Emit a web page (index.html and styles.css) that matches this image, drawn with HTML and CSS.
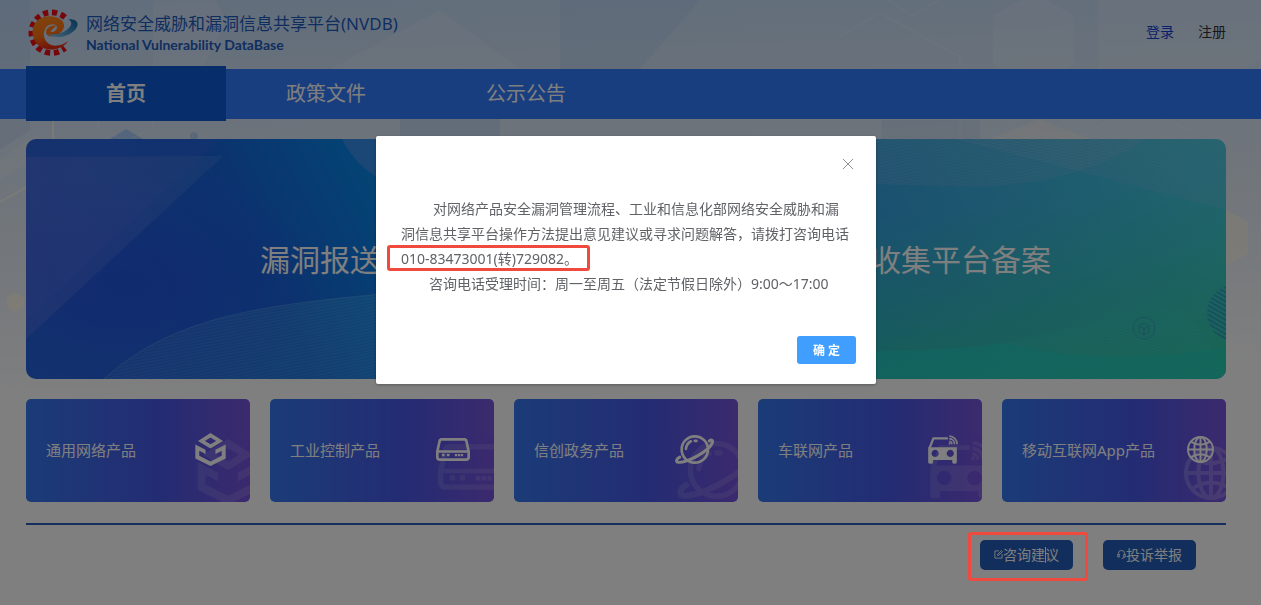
FILE: index.html
```
<!DOCTYPE html>
<html lang="zh-CN">
<head>
    <meta charset="UTF-8">
    <meta name="viewport" content="width=device-width, initial-scale=1.0">
    <title>网络安全威胁和漏洞信息共享平台</title>
    <link rel="stylesheet" href="styles.css">
</head>
<body>
    <!-- 图标 -->
    <svg class="sprite" aria-hidden="true">
        <symbol id="icon-cube" viewBox="0 0 92 100">
            <path fill-rule="evenodd" d="M46 0L84 24L46 47L8 24ZM46 14L29 24L46 34L63 24Z"/>
            <path d="M0 35L31 51V64L12 54V69L46 86L80 69V54L61 64V51L92 35V77L46 100L0 77Z"/>
        </symbol>
        <symbol id="icon-drive" viewBox="0 0 103 69">
            <path d="M17 4H86Q91 4 92 9L99 41V57Q99 65 91 65H12Q4 65 4 57V41L11 9Q12 4 17 4Z" fill="none" stroke="currentColor" stroke-width="8"/>
            <path d="M4 37H99V44H4ZM18 47h8v8h-8zM33 47h8v8h-8zM57 48h7v7h-7zM66 48h7v7h-7zM75 48h7v7h-7z"/>
        </symbol>
        <symbol id="icon-planet" viewBox="0 0 118 88">
            <circle cx="60" cy="44" r="40" fill="none" stroke="currentColor" stroke-width="8"/>
            <path d="M14 67C4 72 1 82 10 83C38 84 103 49 113 24C116 16 110 13 104 18" fill="none" stroke="currentColor" stroke-width="9" stroke-linecap="round"/>
            <path d="M33 42C34 32 39 24 48 19M60 18H65" fill="none" stroke="currentColor" stroke-width="8" stroke-linecap="round"/>
        </symbol>
        <symbol id="icon-car" viewBox="0 0 90 88">
            <path d="M4 40L16 10H60" fill="none" stroke="currentColor" stroke-width="7"/>
            <path fill-rule="evenodd" d="M0 37H87V82Q87 87 82 87H78Q73 87 73 82V76H15V82Q15 87 10 87H5Q0 87 0 82ZM21 45a11 11 0 1 0 .1 0ZM67 45a11 11 0 1 0 .1 0Z"/>
            <path d="M64 3A25 25 0 0 1 88 28M64 11A17 17 0 0 1 80 28M64 19A9 9 0 0 1 72 28" fill="none" stroke="currentColor" stroke-width="5"/>
            <circle cx="65" cy="26" r="3"/>
        </symbol>
        <symbol id="icon-globe" viewBox="0 0 82 82">
            <g fill="none" stroke="currentColor" stroke-width="6">
                <circle cx="41" cy="41" r="38"/>
                <ellipse cx="41" cy="41" rx="19" ry="38"/>
                <path d="M41 3V79M3 41H79M12 17Q41 36 70 17M12 65Q41 46 70 65"/>
            </g>
        </symbol>
    </svg>

    <!-- 页面背景 -->
    <svg class="page-bg" viewBox="0 0 1261 400" preserveAspectRatio="xMidYMin slice" aria-hidden="true">
        <defs>
            <linearGradient id="sky" x1="0" y1="0" x2="0.1" y2="1">
                <stop offset="0" stop-color="#c4dcf8"/>
                <stop offset="0.35" stop-color="#d8e6f6"/>
                <stop offset="0.7" stop-color="#ebf1f8"/>
                <stop offset="1" stop-color="#ffffff"/>
            </linearGradient>
        </defs>
        <rect width="1261" height="400" fill="url(#sky)"/>
        <g fill="#ffffff" fill-opacity="0.14">
            <path d="M153 -20L190 -40L227 20L190 90L153 68Z"/>
            <path d="M993 16L1034 -8L1074 16V64L1034 88L993 64Z"/>
            <path d="M1098 -10H1261V60L1200 90L1098 70Z"/>
            <path d="M330 69L440 10L520 69Z"/>
        </g>
        <path d="M0 0H30V130L0 150ZM560 0H700L640 69H560ZM881 120H980V139H881Z" fill="#9fc0ec" fill-opacity="0.2"/>
        <path d="M400 119H500V139H400Z" fill="#9fc0ec" fill-opacity="0.3"/>
        <path d="M990 139L1040 119L1090 139Z" fill="#fff6e8" fill-opacity="0.35"/>
        <path d="M0 160L34 136L56 146L0 180Z" fill="#ffffff" fill-opacity="0.2"/>
        <path d="M105 142L126 129L148 142Z" fill="#a9cdf8"/>
        <circle cx="194" cy="136" r="4" fill="#b4d0f4"/>
        <g fill="none" stroke="#ffffff" stroke-opacity="0.25">
            <path d="M885 -2L913 16L942 -2M840 36L880 13L960 57V139M1087 139V131L1140 110L1193 131V139"/>
            <path d="M98 119V127L126 142L153 127V119"/>
        </g>
        <path d="M0 202L27 187M53 119V139" fill="none" stroke="#fffaf0" stroke-opacity="0.7" stroke-width="2"/>
        <path d="M7 298L15 293L24 298V307L15 312L7 307Z" fill="#fff8ea"/>
        <path d="M1226 210L1248 222V254L1226 266Z" fill="#fff8ea" fill-opacity="0.6"/>
    </svg>

    <header class="header">
        <div class="brand">
            <svg class="logo" viewBox="28 23 150 144" aria-hidden="true">
                <defs>
                    <linearGradient id="orange" x1="0" y1="0" x2="0.3" y2="1">
                        <stop offset="0" stop-color="#ff8a1e"/>
                        <stop offset="0.6" stop-color="#ff7412"/>
                        <stop offset="1" stop-color="#e82a10"/>
                    </linearGradient>
                    <linearGradient id="blue" x1="0" y1="1" x2="1" y2="0">
                        <stop offset="0" stop-color="#8cc8ec"/>
                        <stop offset="1" stop-color="#0a64a8"/>
                    </linearGradient>
                </defs>
                <path d="M139 51A61 61 0 1 0 139 143" fill="none" stroke="#ec0c14" stroke-width="17" stroke-dasharray="16 10.7"/>
                <path d="M148 122C127 158 50 160 42 102C38 58 78 42 110 50C142 58 144 86 120 101C106 110 86 112 82 98C81 82 98 73 112 76C106 84 98 88 96 94C102 97 113 92 115 82C116 70 95 67 83 80C66 102 80 136 110 136C126 136 137 131 148 122Z" fill="url(#orange)"/>
                <path d="M148 57C178 54 186 74 165 93C144 112 108 116 86 102C115 105 138 97 150 84C161 72 160 62 148 57Z" fill="url(#blue)"/>
            </svg>
            <div>
                <h1 class="brand-name">网络安全威胁和漏洞信息共享平台(NVDB)</h1>
                <p class="brand-sub">National Vulnerability DataBase</p>
            </div>
        </div>
        <div class="account">
            <a class="login" href="#">登录</a>
            <a href="#">注册</a>
        </div>
    </header>

    <nav class="nav">
        <a class="nav-item active" href="#">首页</a>
        <a class="nav-item" href="#">政策文件</a>
        <a class="nav-item" href="#">公示公告</a>
    </nav>

    <main class="main">
        <section class="banner">
            <svg class="banner-bg" viewBox="0 0 1200 240" preserveAspectRatio="none" aria-hidden="true">
                <defs>
                    <linearGradient id="base" x1="0" y1="0.1" x2="1" y2="0">
                        <stop offset="0" stop-color="#2464dc"/>
                        <stop offset="0.15" stop-color="#1864dc"/>
                        <stop offset="0.3" stop-color="#068cec"/>
                        <stop offset="0.7" stop-color="#36a4e0"/>
                        <stop offset="1" stop-color="#42ccdc"/>
                    </linearGradient>
                    <radialGradient id="deep" cx="0.25" cy="0.6" r="0.5">
                        <stop offset="0" stop-color="#2450e0" stop-opacity="0.7"/>
                        <stop offset="1" stop-color="#2450e0" stop-opacity="0"/>
                    </radialGradient>
                    <linearGradient id="green" x1="0.5" y1="0.3" x2="0.7" y2="1">
                        <stop offset="0" stop-color="#30cc98" stop-opacity="0"/>
                        <stop offset="1" stop-color="#30cc98" stop-opacity="0.75"/>
                    </linearGradient>
                    <linearGradient id="violet" x1="0" y1="0" x2="1" y2="0.3">
                        <stop offset="0" stop-color="#8a80f0" stop-opacity="0.26"/>
                        <stop offset="1" stop-color="#8fb4f0" stop-opacity="0.14"/>
                    </linearGradient>
                    <linearGradient id="aqua" x1="0" y1="0" x2="1" y2="0">
                        <stop offset="0" stop-color="#4aa4e8" stop-opacity="0.1"/>
                        <stop offset="1" stop-color="#3cc8f0" stop-opacity="0.3"/>
                    </linearGradient>
                    <pattern id="lines" width="8" height="3" patternUnits="userSpaceOnUse" patternTransform="rotate(-10)">
                        <path d="M0 1H8" stroke="#c8e8ff" stroke-opacity="0.15" stroke-width="1"/>
                    </pattern>
                    <pattern id="mesh" width="8" height="3" patternUnits="userSpaceOnUse" patternTransform="rotate(12)">
                        <path d="M0 1H8" stroke="#c8f4ff" stroke-opacity="0.12" stroke-width="1"/>
                    </pattern>
                    <pattern id="stripes" width="8" height="4" patternUnits="userSpaceOnUse" patternTransform="rotate(30)">
                        <path d="M0 1H8" stroke="#2888c8" stroke-width="2"/>
                    </pattern>
                </defs>
                <rect width="1200" height="240" fill="url(#base)"/>
                <rect width="400" height="240" fill="url(#deep)"/>
                <rect x="600" width="600" height="240" fill="url(#green)"/>
                <path d="M0 0H195L0 181Z" fill="#6a6ef0" fill-opacity="0.12"/>
                <path d="M0 18L197 17L0 200Z" fill="url(#violet)"/>
                <circle cx="400" cy="-42" r="94" fill="#7a9cf0" fill-opacity="0.4"/>
                <path d="M78 240C160 165 270 165 420 148V240Z" fill="url(#aqua)"/>
                <path d="M78 240C160 165 270 165 420 148V240Z" fill="url(#lines)"/>
                <path d="M78 240C160 165 270 165 420 148" fill="none" stroke="#9cc8f4" stroke-opacity="0.25"/>
                <g fill="#88a8e0" fill-opacity="0.14">
                    <path d="M800 0H1120Q1060 42 960 48Q880 46 800 44Z"/>
                    <path d="M930 0H1200V71L1060 34Z"/>
                </g>
                <path d="M800 0H1120Q1060 42 960 48Q880 46 800 44Z" fill="url(#lines)"/>
                <path d="M930 0H1200V71L1060 34Z" fill="url(#mesh)"/>
                <path d="M800 212Q940 215 1020 196T1150 166Q1180 190 1200 240H800Z" fill="#10c8b8" fill-opacity="0.16"/>
                <path d="M800 212Q940 215 1020 196T1150 166Q1180 190 1200 240H800Z" fill="url(#mesh)"/>
                <path d="M800 212Q910 214 980 204Q1080 230 1200 208V240H800Z" fill="#08dcd4" fill-opacity="0.25"/>
                <circle cx="1210" cy="174" r="29" fill="url(#stripes)" fill-opacity="0.6"/>
                <g fill="none" stroke="#3898b8" stroke-width="1" stroke-opacity="0.8">
                    <circle cx="1118" cy="189" r="11"/>
                    <path d="M1118 184L1123 187V193L1118 196L1113 193V187ZM1113 187L1118 190L1123 187M1118 190V196"/>
                </g>
            </svg>
            <a class="banner-link" href="#">漏洞报送</a>
            <a class="banner-link" href="#">漏洞收集平台备案</a>
        </section>

        <section class="cards">
            <a class="card" href="#">
                <span>通用网络产品</span>
                <span class="card-icon cube">
                    <svg><use href="#icon-cube"/></svg>
                    <svg class="shade"><use href="#icon-cube"/></svg>
                </span>
            </a>
            <a class="card" href="#">
                <span>工业控制产品</span>
                <span class="card-icon drive">
                    <svg><use href="#icon-drive"/></svg>
                    <svg class="shade"><use href="#icon-drive"/></svg>
                </span>
            </a>
            <a class="card" href="#">
                <span>信创政务产品</span>
                <span class="card-icon planet">
                    <svg><use href="#icon-planet"/></svg>
                    <svg class="shade"><use href="#icon-planet"/></svg>
                </span>
            </a>
            <a class="card" href="#">
                <span>车联网产品</span>
                <span class="card-icon car">
                    <svg><use href="#icon-car"/></svg>
                    <svg class="shade"><use href="#icon-car"/></svg>
                </span>
            </a>
            <a class="card card-long" href="#">
                <span>移动互联网App产品</span>
                <span class="card-icon globe">
                    <svg><use href="#icon-globe"/></svg>
                    <svg class="shade"><use href="#icon-globe"/></svg>
                </span>
            </a>
        </section>

        <div class="actions">
            <div class="marked-action">
                <button class="action" type="button">
                    <svg class="action-icon" viewBox="0 0 10 10" aria-hidden="true"><path d="M5.5 1H1V9H9V4.5M4 6L4.3 4.6L8.3 0.6L9.4 1.7L5.4 5.7Z"/></svg>咨询建议
                </button>
            </div>
            <button class="action" type="button">
                <svg class="action-icon" viewBox="0 0 10 10" aria-hidden="true"><path d="M1.5 5.5V4A3.5 3.5 0 0 1 8.5 4V5.5M0.8 4.8H2.6V7.8H0.8ZM7.4 4.8H9.2V7.8H7.4ZM8.3 7.8Q8.3 9.3 5.2 9.3"/></svg>投诉举报
            </button>
        </div>
    </main>

    <!-- 咨询弹窗 -->
    <div class="overlay">
        <div class="dialog" role="dialog" aria-modal="true">
            <div class="dialog-header">
                <button class="close" type="button" aria-label="关闭">
                    <svg viewBox="0 0 10 10"><path d="M0 0L10 10M10 0L0 10"/></svg>
                </button>
            </div>
            <div class="dialog-body">
                <p>对网络产品安全漏洞管理流程、工业和信息化部网络安全威胁和漏洞信息共享平台操作方法提出意见建议或寻求问题解答，请拨打咨询电话<span class="phone">010-83473001(转)729082。</span></p>
                <p>咨询电话受理时间：周一至周五（法定节假日除外）9:00～17:00</p>
            </div>
            <div class="dialog-footer">
                <button class="confirm" type="button">确 定</button>
            </div>
        </div>
    </div>
</body>
</html>
```
FILE: styles.css
```
* {
    box-sizing: border-box;
}
body {
    margin: 0;
    font-family: "Noto Sans", "Noto Sans CJK SC", sans-serif;
    font-size: 14px;
    color: #333;
    background-color: #fff;
}
h1, p {
    margin: 0;
}
a {
    color: inherit;
    text-decoration: none;
}
button {
    font-family: inherit;
    border: none;
    cursor: pointer;
}
.sprite {
    display: none;
}
.page-bg {
    position: absolute;
    top: 0;
    left: 0;
    z-index: -1;
    width: 100%;
    height: 400px;
}

/* 顶部 */
.header {
    display: flex;
    justify-content: space-between;
    align-items: center;
    height: 69px;
    padding: 0 35px 6px 28px;
}
.brand {
    display: flex;
    align-items: center;
    gap: 8px;
    color: #1f5cc0;
}
.logo {
    width: 50px;
    height: 48px;
}
.brand-name {
    padding-top: 4px;
    font-size: 17px;
    font-weight: 400;
    line-height: 22px;
}
.brand-sub {
    font-family: Lato, sans-serif;
    font-size: 14px;
    font-weight: bold;
    line-height: 20px;
}
.account {
    display: flex;
    gap: 24px;
    padding-bottom: 2px;
}
.login {
    color: #1040d8;
}

/* 导航 */
.nav {
    display: flex;
    height: 50px;
    padding-left: 26px;
    background-color: #327cfe;
}
.nav-item {
    width: 200px;
    color: #fff;
    font-size: 20px;
    line-height: 50px;
    text-align: center;
}
.nav-item.active {
    margin: -3px 0 -2px;
    background-color: #0e5cd6;
    font-weight: bold;
    line-height: 55px;
}

.main {
    padding: 20px 35px 30px 26px;
}

/* 横幅 */
.banner {
    position: relative;
    display: flex;
    justify-content: space-between;
    align-items: center;
    height: 240px;
    padding: 0 175px 2px 234px;
    border-radius: 10px;
    overflow: hidden;
}
.banner-bg {
    position: absolute;
    top: 0;
    left: 0;
    width: 100%;
    height: 100%;
}
.banner-link {
    position: relative;
    color: #fff;
    font-size: 30px;
}

/* 产品分类 */
.cards {
    display: grid;
    grid-template-columns: repeat(5, 1fr);
    gap: 20px;
    margin-top: 20px;
}
.card {
    display: flex;
    justify-content: space-between;
    align-items: center;
    height: 103px;
    padding: 0 24px 2px 20px;
    border-radius: 5px;
    overflow: hidden;
    background: linear-gradient(to right, #3678f0, #4858e6 60%, #7854dc);
    color: #fff;
    font-size: 15px;
}
.card-long {
    padding-right: 12px;
}
.card-icon {
    position: relative;
}
.card-icon svg {
    display: block;
    width: 100%;
    height: 100%;
    fill: currentColor;
}
.card-icon .shade {
    position: absolute;
    top: 6px;
    left: 2px;
    width: 200%;
    height: 200%;
    opacity: 0.12;
}
.cube {
    width: 31px;
    height: 33px;
}
.drive {
    width: 34px;
    height: 23px;
}
.planet {
    width: 39px;
    height: 29px;
}
.car {
    width: 30px;
    height: 29px;
}
.globe {
    width: 27px;
    height: 27px;
}
.globe .shade {
    top: 10px;
    left: -3px;
    opacity: 0.2;
}

/* 底部按钮 */
.actions {
    display: flex;
    justify-content: flex-end;
    gap: 30px;
    margin-top: 21px;
    padding: 15px 30px 0 0;
    border-top: 2px solid #2a5cb8;
}
.action {
    display: flex;
    align-items: center;
    height: 30px;
    padding: 0 14px 2px;
    border-radius: 5px;
    background-color: #245cb8;
    color: #fff;
    font-size: 14px;
}
.action-icon {
    width: 9px;
    height: 9px;
    overflow: visible;
    fill: none;
    stroke: currentColor;
}
.marked-action {
    position: relative;
}
/* 文本光标 */
.marked-action::before {
    content: "";
    position: absolute;
    top: 7px;
    left: 65px;
    width: 1px;
    height: 16px;
    background-color: #fff;
}
.marked-action::after, .phone::after {
    content: "";
    position: absolute;
    border: 3px solid #f04a3e;
    border-radius: 3px;
    pointer-events: none;
}
.marked-action::after {
    z-index: 20;
    inset: -8px -15px -11px -12px;
}

/* 弹窗 */
.overlay {
    position: fixed;
    inset: 0;
    z-index: 10;
    padding: 136px 9px 0 0;
    background-color: rgba(0, 0, 0, 0.5);
}
.dialog {
    width: 500px;
    max-width: 100%;
    margin: 0 auto;
    border-radius: 2px;
    background-color: #fff;
    box-shadow: 0 1px 3px rgba(0, 0, 0, 0.3);
}
.dialog-header {
    display: flex;
    justify-content: flex-end;
    height: 60px;
    padding: 20px 20px 0;
}
.close {
    display: flex;
    align-items: center;
    justify-content: center;
    width: 16px;
    height: 16px;
    padding: 0;
    background: none;
}
.close svg {
    width: 10px;
    height: 10px;
    overflow: visible;
    stroke: #909399;
}
.dialog-body {
    padding: 0 25px;
    color: #606266;
    line-height: 25px;
}
.dialog-body p {
    text-indent: 32px;
}
.dialog-body p + p {
    text-indent: 28px;
}
.phone {
    position: relative;
    display: inline-block;
    text-indent: 0;
}
.phone::after {
    inset: -1px -12px 0 -14px;
}
.dialog-footer {
    display: flex;
    justify-content: flex-end;
    padding: 40px 20px 20px;
}
.confirm {
    height: 28px;
    padding: 0 16px;
    border-radius: 3px;
    background-color: #409eff;
    color: #fff;
    font-size: 12px;
    font-weight: bold;
}
```
